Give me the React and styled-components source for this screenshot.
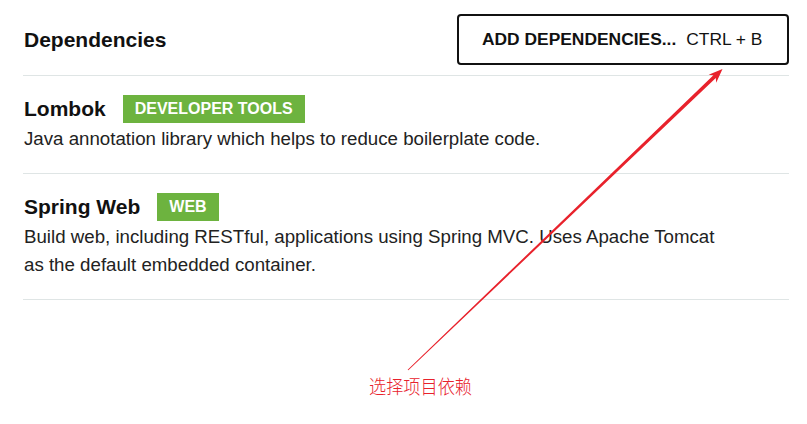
import React from "react";
import styled, { createGlobalStyle } from "styled-components";

const Global = createGlobalStyle`
  html, body { margin: 0; padding: 0; background: #fff; }
  body { font-family: "Liberation Sans", Arial, sans-serif; color: #1a1a1a; }
`;

const Page = styled.div`
  position: relative;
  width: 807px;
  height: 424px;
  overflow: hidden;
  background: #fff;
`;

const Content = styled.div`
  width: 766px;
  margin-left: 23px;
`;

const Header = styled.header`
  display: flex;
  align-items: center;
  justify-content: space-between;
  padding: 14px 0 10px;
  border-bottom: 1px solid #dfe5e5;
`;

const Heading = styled.h1`
  margin: 0 0 0 1px;
  font-size: 21px;
  font-weight: 700;
  color: #111;
`;

const AddButton = styled.button`
  display: flex;
  align-items: center;
  gap: 10px;
  box-sizing: border-box;
  width: 332px;
  height: 51px;
  padding: 0 22px 0 23px;
  background: #fff;
  border: 2px solid #111;
  border-radius: 4px;
  font-family: "Liberation Sans", Arial, sans-serif;
  font-size: 17.4px;
  color: #111;
  cursor: pointer;
`;

const ButtonLabel = styled.span`
  font-weight: 700;
`;

const Shortcut = styled.span`
  font-weight: 400;
`;

const Row = styled.div`
  padding: 19px 0 20px;
  border-bottom: 1px solid #dfe5e5;
`;

const TitleLine = styled.div`
  display: flex;
  align-items: center;
  gap: 17px;
  height: 28px;
  padding-left: 1px;
`;

const Title = styled.span`
  font-size: 21px;
  font-weight: 700;
  line-height: 28px;
  color: #111;
`;

const Badge = styled.span`
  display: inline-block;
  height: 28px;
  line-height: 28px;
  padding: 0 12px;
  background: #6db33f;
  color: #fff;
  font-size: 16px;
  font-weight: 700;
  text-transform: uppercase;
`;

const Description = styled.p`
  margin: 2px 0 0 1px;
  max-width: 705px;
  font-size: 18.7px;
  line-height: 28px;
  color: #222;
`;

const Overlay = styled.svg`
  position: absolute;
  left: 0;
  top: 0;
  width: 807px;
  height: 424px;
  pointer-events: none;
`;

const Note = styled.div`
  position: absolute;
  left: 369px;
  top: 372px;
  font-family: "Noto Sans CJK SC", sans-serif;
  font-size: 19.5px;
  font-weight: 300;
  line-height: 28px;
  color: #e8222c;
  white-space: nowrap;
  transform: scaleX(0.88);
  transform-origin: left top;
`;

const deps = [
  {
    name: "Lombok",
    tag: "Developer Tools",
    desc: "Java annotation library which helps to reduce boilerplate code.",
  },
  {
    name: "Spring Web",
    tag: "Web",
    desc: "Build web, including RESTful, applications using Spring MVC. Uses Apache Tomcat as the default embedded container.",
  },
];

export default function App() {
  return (
    <Page>
      <Global />
      <Content>
        <Header>
          <Heading>Dependencies</Heading>
          <AddButton>
            <ButtonLabel>ADD DEPENDENCIES...</ButtonLabel>
            <Shortcut>CTRL + B</Shortcut>
          </AddButton>
        </Header>
        {deps.map((d) => (
          <Row key={d.name}>
            <TitleLine>
              <Title>{d.name}</Title>
              <Badge>{d.tag}</Badge>
            </TitleLine>
            <Description>{d.desc}</Description>
          </Row>
        ))}
      </Content>
      <Overlay viewBox="0 0 807 424">
        <polygon
          fill="#e8222c"
          points="407.65,369.64 713.4,75.3 708.6,74.7 722.5,69 716.2,82.7 715.8,77.9 408.35,370.36"
        />
      </Overlay>
      <Note>选择项目依赖</Note>
    </Page>
  );
}
